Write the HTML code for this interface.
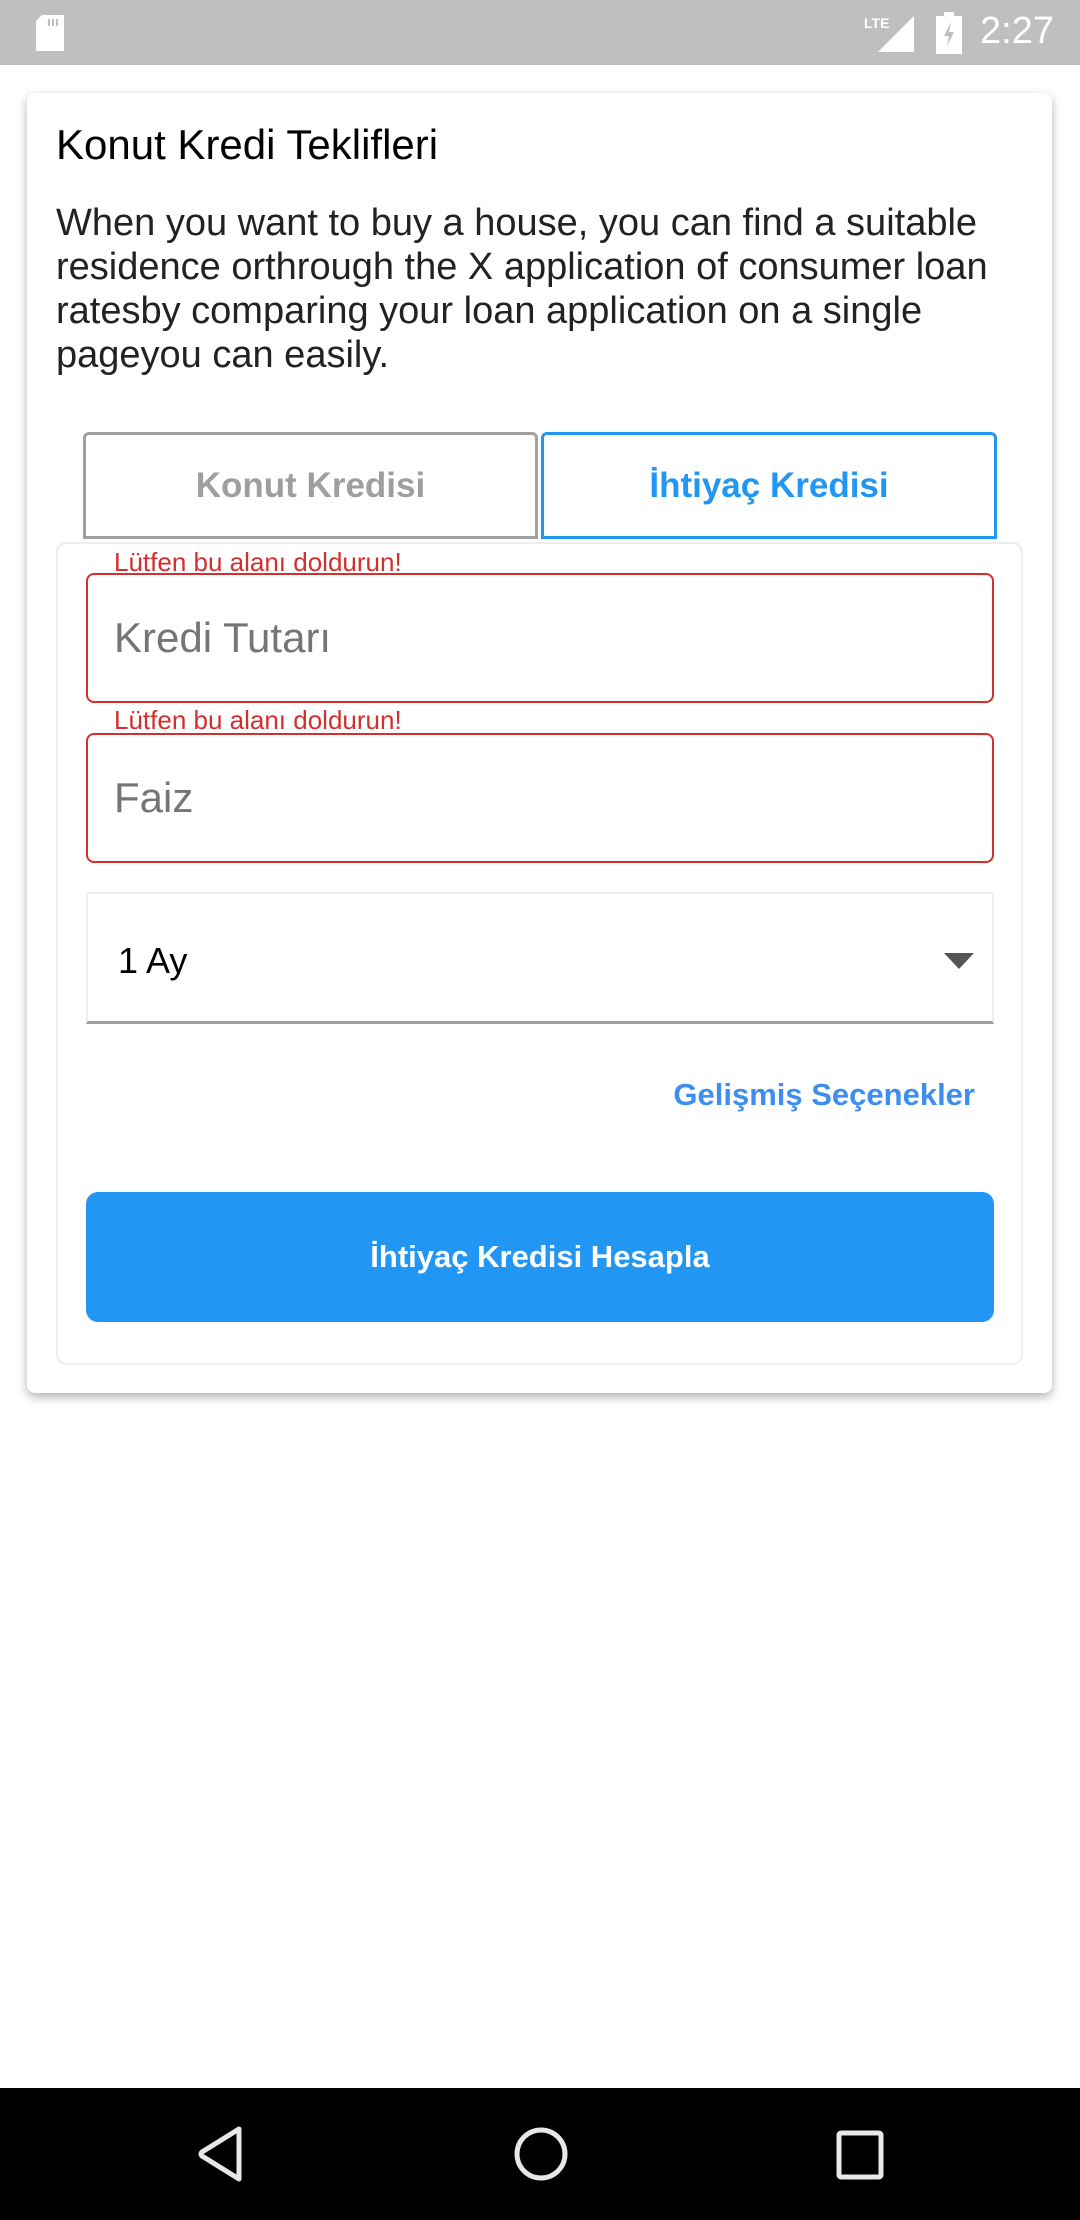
<!DOCTYPE html>
<html><head><meta charset="utf-8"><style>
*{margin:0;padding:0;box-sizing:border-box}
body{width:1080px;height:2220px;background:#fff;font-family:"Liberation Sans",sans-serif;position:relative;overflow:hidden}
.abs{position:absolute}
.status{left:0;top:0;width:1080px;height:65px;background:#bfbfbf}
.card{left:27px;top:93px;width:1025px;height:1300px;background:#fff;border-radius:8px;box-shadow:0 4px 10px rgba(0,0,0,0.3)}
.tab{top:432px;height:107px;display:flex;align-items:center;justify-content:center;font-weight:bold;font-size:35px;border-radius:6px 6px 0 0}
.err{left:114px;font-size:26px;color:#d32f2f;line-height:28px}
.field{left:86px;width:908px;border:2px solid #d32f2f;border-radius:8px;background:#fff;font-size:42px;color:#757575;padding-left:26px;display:flex;align-items:center}
</style></head><body>
<div class="abs status"></div>
<svg class="abs" style="left:34px;top:15px" width="32" height="38" viewBox="0 0 32 38"><path d="M8 0H30V36H2V6Z" fill="#fff"/><rect x="14" y="4" width="2" height="7" fill="#bfbfbf"/><rect x="18" y="4" width="2" height="7" fill="#bfbfbf"/><rect x="22" y="4" width="2" height="7" fill="#bfbfbf"/></svg>
<div class="abs" style="left:864px;top:15px;font-size:14px;color:#fff;font-weight:bold">LTE</div>
<svg class="abs" style="left:876px;top:14px" width="40" height="40"><path d="M38 2V38H2Z" fill="#fff"/></svg>
<svg class="abs" style="left:936px;top:12px" width="28" height="42"><rect x="8" y="0" width="10" height="4" fill="#fff"/><rect x="0" y="4" width="26" height="38" fill="#fff"/><path d="M15 10L8 24H13L11 34L18 20H13Z" fill="#bfbfbf"/></svg>
<div class="abs" style="left:980px;top:10px;font-size:38px;color:#fff">2:27</div>

<div class="abs card"></div>
<div class="abs" style="left:56px;top:121px;font-size:42px;color:#000">Konut Kredi Teklifleri</div>
<div class="abs" style="left:56px;top:201px;width:965px;font-size:38px;line-height:44px;color:#222">When you want to buy a house, you can find a suitable residence orthrough the X application of consumer loan ratesby comparing your loan application on a single pageyou can easily.</div>

<div class="abs" style="left:56px;top:542px;width:967px;height:823px;border:2px solid #eee;border-radius:10px"></div>
<div class="abs tab" style="left:83px;width:455px;border:3px solid #a0a0a0;color:#9e9e9e">Konut Kredisi</div>
<div class="abs tab" style="left:541px;width:456px;border:3px solid #2196f3;color:#2196f3">İhtiyaç Kredisi</div>

<div class="abs err" style="top:548px">Lütfen bu alanı doldurun!</div>
<div class="abs field" style="top:573px;height:130px">Kredi Tutarı</div>
<div class="abs err" style="top:706px">Lütfen bu alanı doldurun!</div>
<div class="abs field" style="top:733px;height:130px">Faiz</div>

<div class="abs" style="left:86px;top:892px;width:908px;height:132px;border:2px solid #eee;border-bottom:3px solid #9e9e9e;font-size:36px;color:#000;padding-left:30px;padding-top:6px;display:flex;align-items:center">1 Ay</div>
<svg class="abs" style="left:944px;top:953px" width="30" height="16"><path d="M0 0H30L15 16Z" fill="#555"/></svg>

<div class="abs" style="left:600px;width:375px;top:1077px;text-align:right;font-size:31px;font-weight:bold;color:#3d8ef0">Gelişmiş Seçenekler</div>

<div class="abs" style="left:86px;top:1192px;width:908px;height:130px;background:#2196f3;border-radius:12px;color:#fff;font-size:31px;font-weight:bold;display:flex;align-items:center;justify-content:center">İhtiyaç Kredisi Hesapla</div>

<div class="abs" style="left:0;top:2088px;width:1080px;height:132px;background:#000"></div>
<svg class="abs" style="left:195px;top:2124px" width="52" height="60"><path d="M44 5V55L7 32Q5 30 7 28Z" fill="none" stroke="#e8e8e8" stroke-width="5" stroke-linejoin="round"/></svg>
<svg class="abs" style="left:511px;top:2124px" width="60" height="60"><circle cx="30" cy="30" r="24" fill="none" stroke="#e8e8e8" stroke-width="5"/></svg>
<svg class="abs" style="left:834px;top:2128px" width="54" height="54"><rect x="5" y="5" width="42" height="44" rx="2" fill="none" stroke="#e8e8e8" stroke-width="5"/></svg>
</body></html>
